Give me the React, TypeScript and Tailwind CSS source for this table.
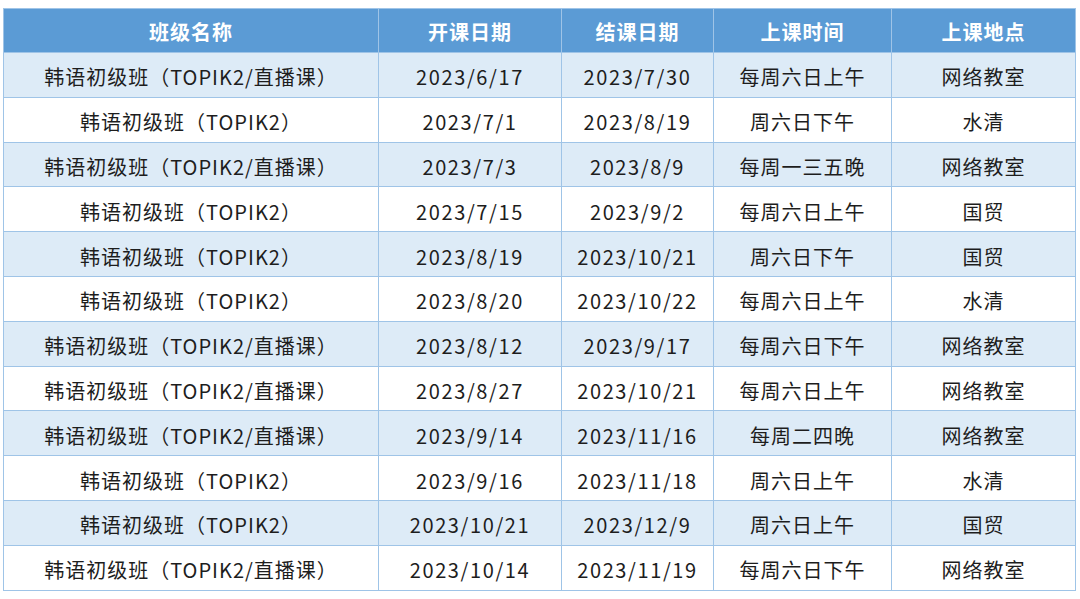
const rows: [string, string, string, string, string][] = [
  ['韩语初级班（TOPIK2/直播课）', '2023/6/17', '2023/7/30', '每周六日上午', '网络教室'],
  ['韩语初级班（TOPIK2）', '2023/7/1', '2023/8/19', '周六日下午', '水清'],
  ['韩语初级班（TOPIK2/直播课）', '2023/7/3', '2023/8/9', '每周一三五晚', '网络教室'],
  ['韩语初级班（TOPIK2）', '2023/7/15', '2023/9/2', '每周六日上午', '国贸'],
  ['韩语初级班（TOPIK2）', '2023/8/19', '2023/10/21', '周六日下午', '国贸'],
  ['韩语初级班（TOPIK2）', '2023/8/20', '2023/10/22', '每周六日上午', '水清'],
  ['韩语初级班（TOPIK2/直播课）', '2023/8/12', '2023/9/17', '每周六日下午', '网络教室'],
  ['韩语初级班（TOPIK2/直播课）', '2023/8/27', '2023/10/21', '每周六日上午', '网络教室'],
  ['韩语初级班（TOPIK2/直播课）', '2023/9/14', '2023/11/16', '每周二四晚', '网络教室'],
  ['韩语初级班（TOPIK2）', '2023/9/16', '2023/11/18', '周六日上午', '水清'],
  ['韩语初级班（TOPIK2）', '2023/10/21', '2023/12/9', '周六日上午', '国贸'],
  ['韩语初级班（TOPIK2/直播课）', '2023/10/14', '2023/11/19', '每周六日下午', '网络教室'],
];

const headers = ['班级名称', '开课日期', '结课日期', '上课时间', '上课地点'];

export default function App() {
  return (
    <div
      className="w-[1080px] h-[599px] bg-white pt-[8px] pl-[3px] overflow-hidden"
      style={{ fontFamily: '"Noto Sans CJK SC", "Noto Sans", sans-serif' }}
    >
      {/* 课程表 */}
      <table className="table-fixed border-collapse w-[1072px] text-[20px] tracking-[1px] text-[#1d1d1d]">
        <colgroup>
          <col className="w-[375px]" />
          <col className="w-[183px]" />
          <col className="w-[152px]" />
          <col className="w-[178px]" />
          <col className="w-[184px]" />
        </colgroup>
        <thead>
          <tr className="h-[44px] bg-[#5b9bd5]">
            {headers.map((h) => (
              <th key={h} className="border border-[#9fc4e7] text-white font-bold text-center p-0 pt-[3px] leading-none">
                {h}
              </th>
            ))}
          </tr>
        </thead>
        <tbody>
          {rows.map((r, i) => (
            <tr key={i} className={i % 2 === 0 ? 'h-[44.8px] bg-[#ddebf7]' : 'h-[44.8px] bg-white'}>
              {r.map((c, j) => (
                <td
                  key={j}
                  className={
                    j === 1 || j === 2
                      ? 'border border-[#9fc4e7] text-center p-0 pt-[5px] leading-none whitespace-nowrap tracking-[1.6px]'
                      : 'border border-[#9fc4e7] text-center p-0 pt-[5px] leading-none whitespace-nowrap'
                  }
                >
                  {c}
                </td>
              ))}
            </tr>
          ))}
        </tbody>
      </table>
    </div>
  );
}
